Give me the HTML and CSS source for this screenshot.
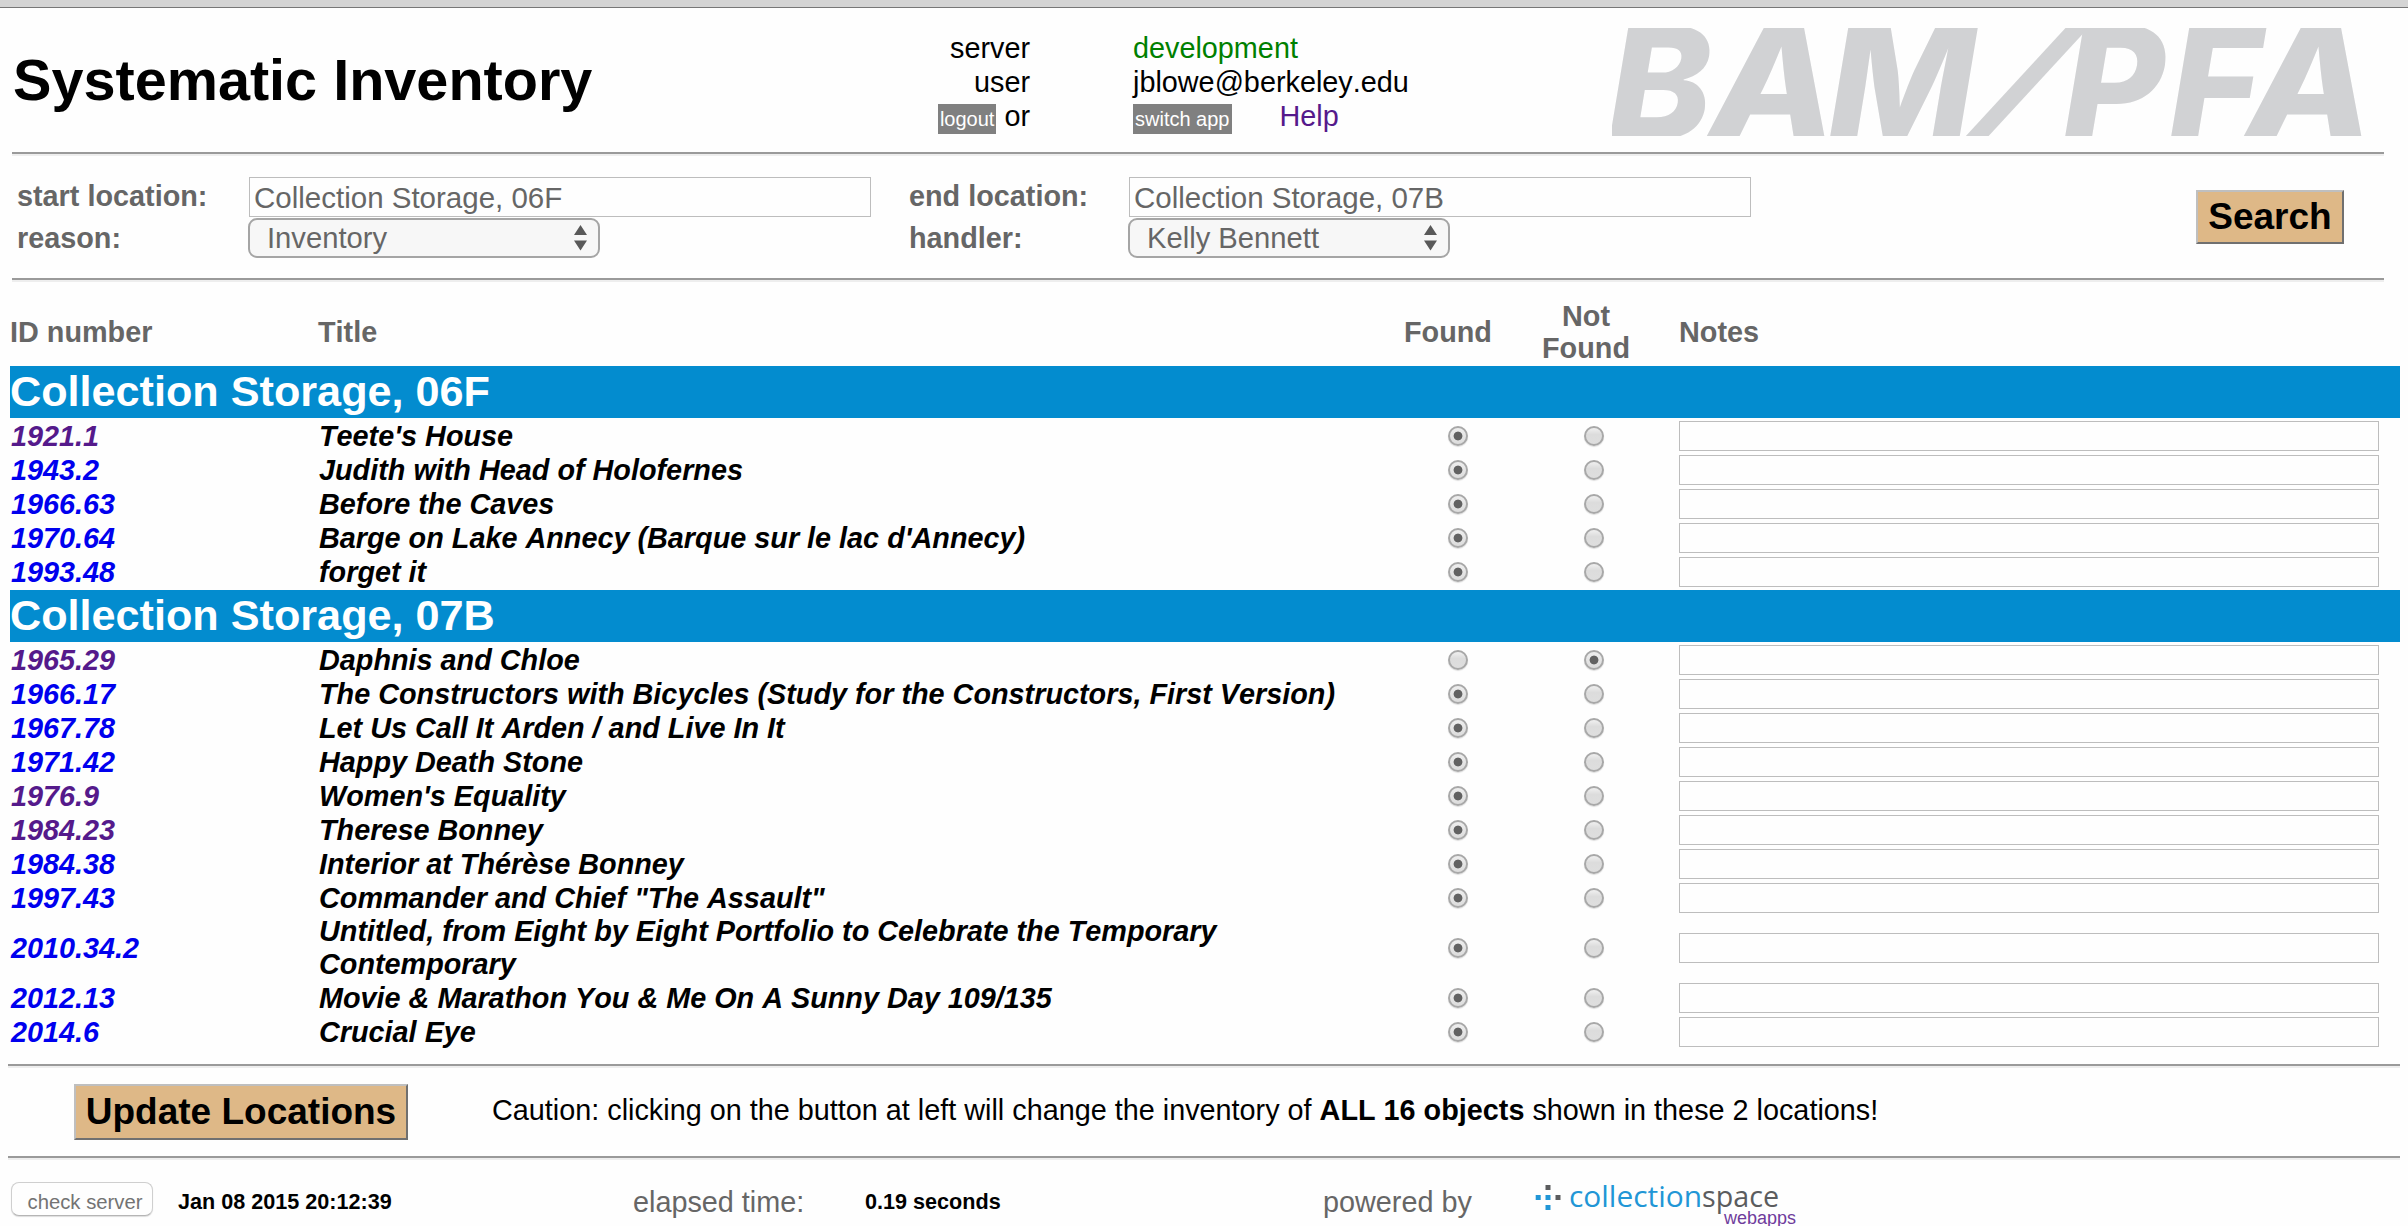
FILE: index.html
```html
<!DOCTYPE html>
<html lang="en">
<head>
<meta charset="utf-8">
<title>Systematic Inventory</title>
<link rel="stylesheet" href="styles.css">
</head>
<body>
<div class="chrome-edge"></div>

<header class="header">
  <h1 class="app-title">Systematic Inventory</h1>
  <div class="session-labels">
    <div>server</div>
    <div>user</div>
    <div><button class="tag">logout</button> or</div>
  </div>
  <div class="session-values">
    <div class="server">development</div>
    <div>jblowe@berkeley.edu</div>
    <div><button class="tag">switch app</button><a class="help">Help</a></div>
  </div>
  <svg class="logo" width="752" height="108" viewBox="0 0 752 108" role="img" aria-label="BAM/PFA">
    <text class="logo-text" y="111" x="-4">B</text>
    <text class="logo-text" transform="translate(97 111) scale(1.06 1)">A</text>
    <text class="logo-text" y="111" x="216">M</text>
    <text class="logo-text" transform="translate(352 111) skewX(-26)">/</text>
    <text class="logo-text" y="111" x="451">P</text>
    <text class="logo-text" y="111" x="557">F</text>
    <text class="logo-text" transform="translate(634 111) scale(1.06 1)">A</text>
  </svg>
</header>
<hr class="rule">

<section class="criteria">
  <div class="labels"><label>start location:</label><label>reason:</label></div>
  <div class="fields">
    <input class="field" type="text" value="Collection Storage, 06F">
    <div class="select select-reason"><span>Inventory</span>
      <svg width="13" height="26" viewBox="0 0 13 26"><path d="M6.5 0L13 10H0zM0 15.500H13L6.500 25.500z"/></svg></div>
  </div>
  <div class="labels"><label>end location:</label><label>handler:</label></div>
  <div class="fields">
    <input class="field" type="text" value="Collection Storage, 07B">
    <div class="select select-handler"><span>Kelly Bennett</span>
      <svg width="13" height="26" viewBox="0 0 13 26"><path d="M6.5 0L13 10H0zM0 15.500H13L6.500 25.500z"/></svg></div>
  </div>
  <button class="action search">Search</button>
</section>
<hr class="rule">

<main class="inventory">
  <div class="row head">
    <div>ID number</div><div>Title</div><div class="col-found">Found</div><div class="col-missing">Not<br>Found</div><div>Notes</div>
  </div>

  <h2 class="band">Collection Storage, 06F</h2>
  <div class="group">
    <div class="row"><a class="id visited">1921.1</a><div class="title">Teete's House</div><input type="radio" name="r1" checked><input type="radio" name="r1"><input type="text" class="note"></div>
    <div class="row"><a class="id">1943.2</a><div class="title">Judith with Head of Holofernes</div><input type="radio" name="r2" checked><input type="radio" name="r2"><input type="text" class="note"></div>
    <div class="row"><a class="id">1966.63</a><div class="title">Before the Caves</div><input type="radio" name="r3" checked><input type="radio" name="r3"><input type="text" class="note"></div>
    <div class="row"><a class="id">1970.64</a><div class="title">Barge on Lake Annecy (Barque sur le lac d'Annecy)</div><input type="radio" name="r4" checked><input type="radio" name="r4"><input type="text" class="note"></div>
    <div class="row"><a class="id">1993.48</a><div class="title">forget it</div><input type="radio" name="r5" checked><input type="radio" name="r5"><input type="text" class="note"></div>
  </div>

  <h2 class="band">Collection Storage, 07B</h2>
  <div class="group">
    <div class="row"><a class="id visited">1965.29</a><div class="title">Daphnis and Chloe</div><input type="radio" name="r6"><input type="radio" name="r6" checked><input type="text" class="note"></div>
    <div class="row"><a class="id">1966.17</a><div class="title">The Constructors with Bicycles (Study for the Constructors, First Version)</div><input type="radio" name="r7" checked><input type="radio" name="r7"><input type="text" class="note"></div>
    <div class="row"><a class="id">1967.78</a><div class="title">Let Us Call It Arden / and Live In It</div><input type="radio" name="r8" checked><input type="radio" name="r8"><input type="text" class="note"></div>
    <div class="row"><a class="id">1971.42</a><div class="title">Happy Death Stone</div><input type="radio" name="r9" checked><input type="radio" name="r9"><input type="text" class="note"></div>
    <div class="row"><a class="id visited">1976.9</a><div class="title">Women's Equality</div><input type="radio" name="r10" checked><input type="radio" name="r10"><input type="text" class="note"></div>
    <div class="row"><a class="id visited">1984.23</a><div class="title">Therese Bonney</div><input type="radio" name="r11" checked><input type="radio" name="r11"><input type="text" class="note"></div>
    <div class="row"><a class="id">1984.38</a><div class="title">Interior at Thérèse Bonney</div><input type="radio" name="r12" checked><input type="radio" name="r12"><input type="text" class="note"></div>
    <div class="row"><a class="id">1997.43</a><div class="title">Commander and Chief "The Assault"</div><input type="radio" name="r13" checked><input type="radio" name="r13"><input type="text" class="note"></div>
    <div class="row"><a class="id">2010.34.2</a><div class="title">Untitled, from Eight by Eight Portfolio to Celebrate the Temporary Contemporary</div><input type="radio" name="r14" checked><input type="radio" name="r14"><input type="text" class="note"></div>
    <div class="row"><a class="id">2012.13</a><div class="title">Movie &amp; Marathon You &amp; Me On A Sunny Day 109/135</div><input type="radio" name="r15" checked><input type="radio" name="r15"><input type="text" class="note"></div>
    <div class="row"><a class="id">2014.6</a><div class="title">Crucial Eye</div><input type="radio" name="r16" checked><input type="radio" name="r16"><input type="text" class="note"></div>
  </div>
</main>

<hr class="rule rule-wide">
<section class="update">
  <button class="action">Update Locations</button>
  <div>Caution: clicking on the button at left will change the inventory of <b>ALL 16 objects</b> shown in these 2 locations!</div>
</section>
<hr class="rule rule-wide">

<footer class="footer">
  <button class="check">check server</button>
  <b class="stamp">Jan 08 2015 20:12:39</b>
  <span class="caption">elapsed time:</span>
  <b class="stamp">0.19 seconds</b>
  <span class="caption">powered by</span>
  <svg class="cspace" width="270" height="60" viewBox="1530 1166 270 60">
    <path fill="#5b5c5e" d="M1546.500 1185h5v5h-5zM1556.500 1195h5v5h-5z"/>
    <path fill="#2196d6" d="M1536.700 1195h5v5h-5zM1546.500 1195h5v5h-5zM1546.500 1205h5v5h-5z"/>
    <text class="cs-name" x="1570" y="1207" fill="#2196d6" textLength="133" lengthAdjust="spacingAndGlyphs">collection</text>
    <text class="cs-name" x="1703" y="1207" fill="#5b5c5e" textLength="77" lengthAdjust="spacingAndGlyphs">space</text>
    <text class="cs-sub" x="1725" y="1224">webapps</text>
  </svg>
</footer>
</body>
</html>
```
FILE: styles.css
```css
* { box-sizing: border-box; }

html, body { height: 100%; }

body {
  margin: 0;
  overflow: hidden;
  background: #fefefe;
  color: #000;
  font-family: "Liberation Sans", Arial, sans-serif;
  font-size: 28.8px;
  line-height: 34px;
  font-kerning: none;
}

button, input { margin: 0; font-family: inherit; font-kerning: none; }

.chrome-edge {
  height: 8px;
  background: #d4d4d4;
  border-bottom: 1px solid #777;
}

.rule {
  height: 4px;
  margin: 0 24px 0 12px;
  border: 0;
  border-top: 2px solid #9a9a9a;
  background: #eee;
}
.rule-wide { margin: 0 8px; }

/* Header */
.header {
  display: grid;
  grid-template-columns: 688px 330px 582px 752px;
  height: 144px;
  padding-left: 12px;
}
.logo { margin-top: 20px; }
.app-title {
  margin: 40px 0 0 1px;
  font-size: 57.6px;
  line-height: 64px;
}
.session-labels, .session-values { padding-top: 23px; }
.session-labels { text-align: right; }
.session-values { padding-left: 103px; }
.server { color: #008000; }
.tag {
  height: 30px;
  padding: 0 2px;
  border: 0;
  background: #808080;
  color: #fff;
  font-size: 20px;
  line-height: 30px;
}
.help { margin-left: 48px; color: #551a8b; }
.logo-text {
  font: italic 800 156px Inter, sans-serif;
  fill: #d1d2d4;
}

/* Search criteria */
.criteria {
  display: flex;
  align-items: flex-start;
  height: 122px;
  padding: 21px 0 0 17px;
  color: #666;
}
.labels {
  display: flex;
  flex-direction: column;
  gap: 8px;
  width: 232px;
  padding-top: 2px;
  font-weight: bold;
}
.fields + .labels { width: 220px; margin-left: 38px; }
.fields { width: 622px; }
.field {
  display: block;
  width: 622px;
  height: 40px;
  padding: 2px 4px 0;
  border: 1px solid #bdbdbd;
  background: #fefefe;
  color: #666;
  font-size: 29.5px;
}
.select {
  display: flex;
  align-items: center;
  justify-content: space-between;
  height: 40px;
  margin: 1px 0 0 -1px;
  padding: 0 11px 0 17px;
  border: 2px solid #a5a5a5;
  border-radius: 9px;
  background: #f7f7f7;
  font-size: 29.2px;
}
.select svg { fill: #595959; }
.select-reason { width: 352px; }
.select-handler { width: 322px; }

.action {
  height: 56px;
  padding: 0;
  border: 2px solid;
  border-color: #bfbfbf #707070 #707070 #bfbfbf;
  background: #deb887;
  color: #000;
  font-size: 37px;
  font-weight: bold;
  white-space: nowrap;
}
.search { width: 148px; height: 54px; margin: 13px 0 0 445px; }

/* Inventory table */
.inventory { padding: 0 8px 14px 10px; }
.row {
  display: grid;
  grid-template-columns: 308px 1072px 136px 153px 700px;
  align-items: center;
  min-height: 34px;
}
.head {
  height: 84px;
  padding-top: 16px;
  color: #666;
  font-weight: bold;
  line-height: 32px;
}
.col-found { padding-left: 14px; }
.col-missing { width: 120px; text-align: center; }
.band {
  height: 52px;
  margin: 0;
  background: #038ccf;
  color: #fff;
  font-size: 43.2px;
  line-height: 50px;
}
.group {
  padding: 1px 0;
  font-weight: bold;
  font-style: italic;
}
.id { padding-left: 1px; color: #00e; }
.visited { color: #551a8b; }
.title { padding-left: 1px; line-height: 33px; }
.note {
  width: 700px;
  height: 30px;
  border: 1px solid #bdbdbd;
  background: #fefefe;
}
input[type="radio"] {
  appearance: none;
  width: 20px;
  height: 20px;
  margin-left: 58px;
  border: 2px solid #a8a8a8;
  border-radius: 50%;
  background: linear-gradient(#f0f0f0, #dcdcdc 40%, #dedede);
  box-shadow: 0 1px 1px #ddd;
}
input[type="radio"]:checked {
  background: radial-gradient(circle, #626262 4px, transparent 4.800px), linear-gradient(#eee, #dcdcdc);
}

/* Update bar */
.update {
  display: flex;
  align-items: flex-start;
  height: 88px;
  padding: 16px 0 0 74px;
}
.update .action { width: 334px; margin-right: 84px; }
.update div { padding-top: 9px; }

/* Footer */
.footer {
  display: grid;
  grid-template-columns: 167px 455px 232px 458px 206px 270px;
  align-items: start;
  padding: 6px 0 0 11px;
}
.check {
  width: 142px;
  height: 34px;
  margin-top: 16px;
  padding: 6px 0 0 6px;
  border: 1px solid #cfcfcf;
  border-bottom-color: #b5b5b5;
  border-radius: 8px;
  background: #fefefe;
  box-shadow: 0 1px 1px #ddd;
  color: #737373;
  font-size: 20.3px;
}
.stamp { padding-top: 19px; font-size: 21.6px; }
.caption { padding-top: 19px; color: #666; }
.cs-name { font: 30px "Open Sans", sans-serif; }
.cs-sub { font: 18px "Liberation Sans", sans-serif; fill: #6f3c9c; }
```
